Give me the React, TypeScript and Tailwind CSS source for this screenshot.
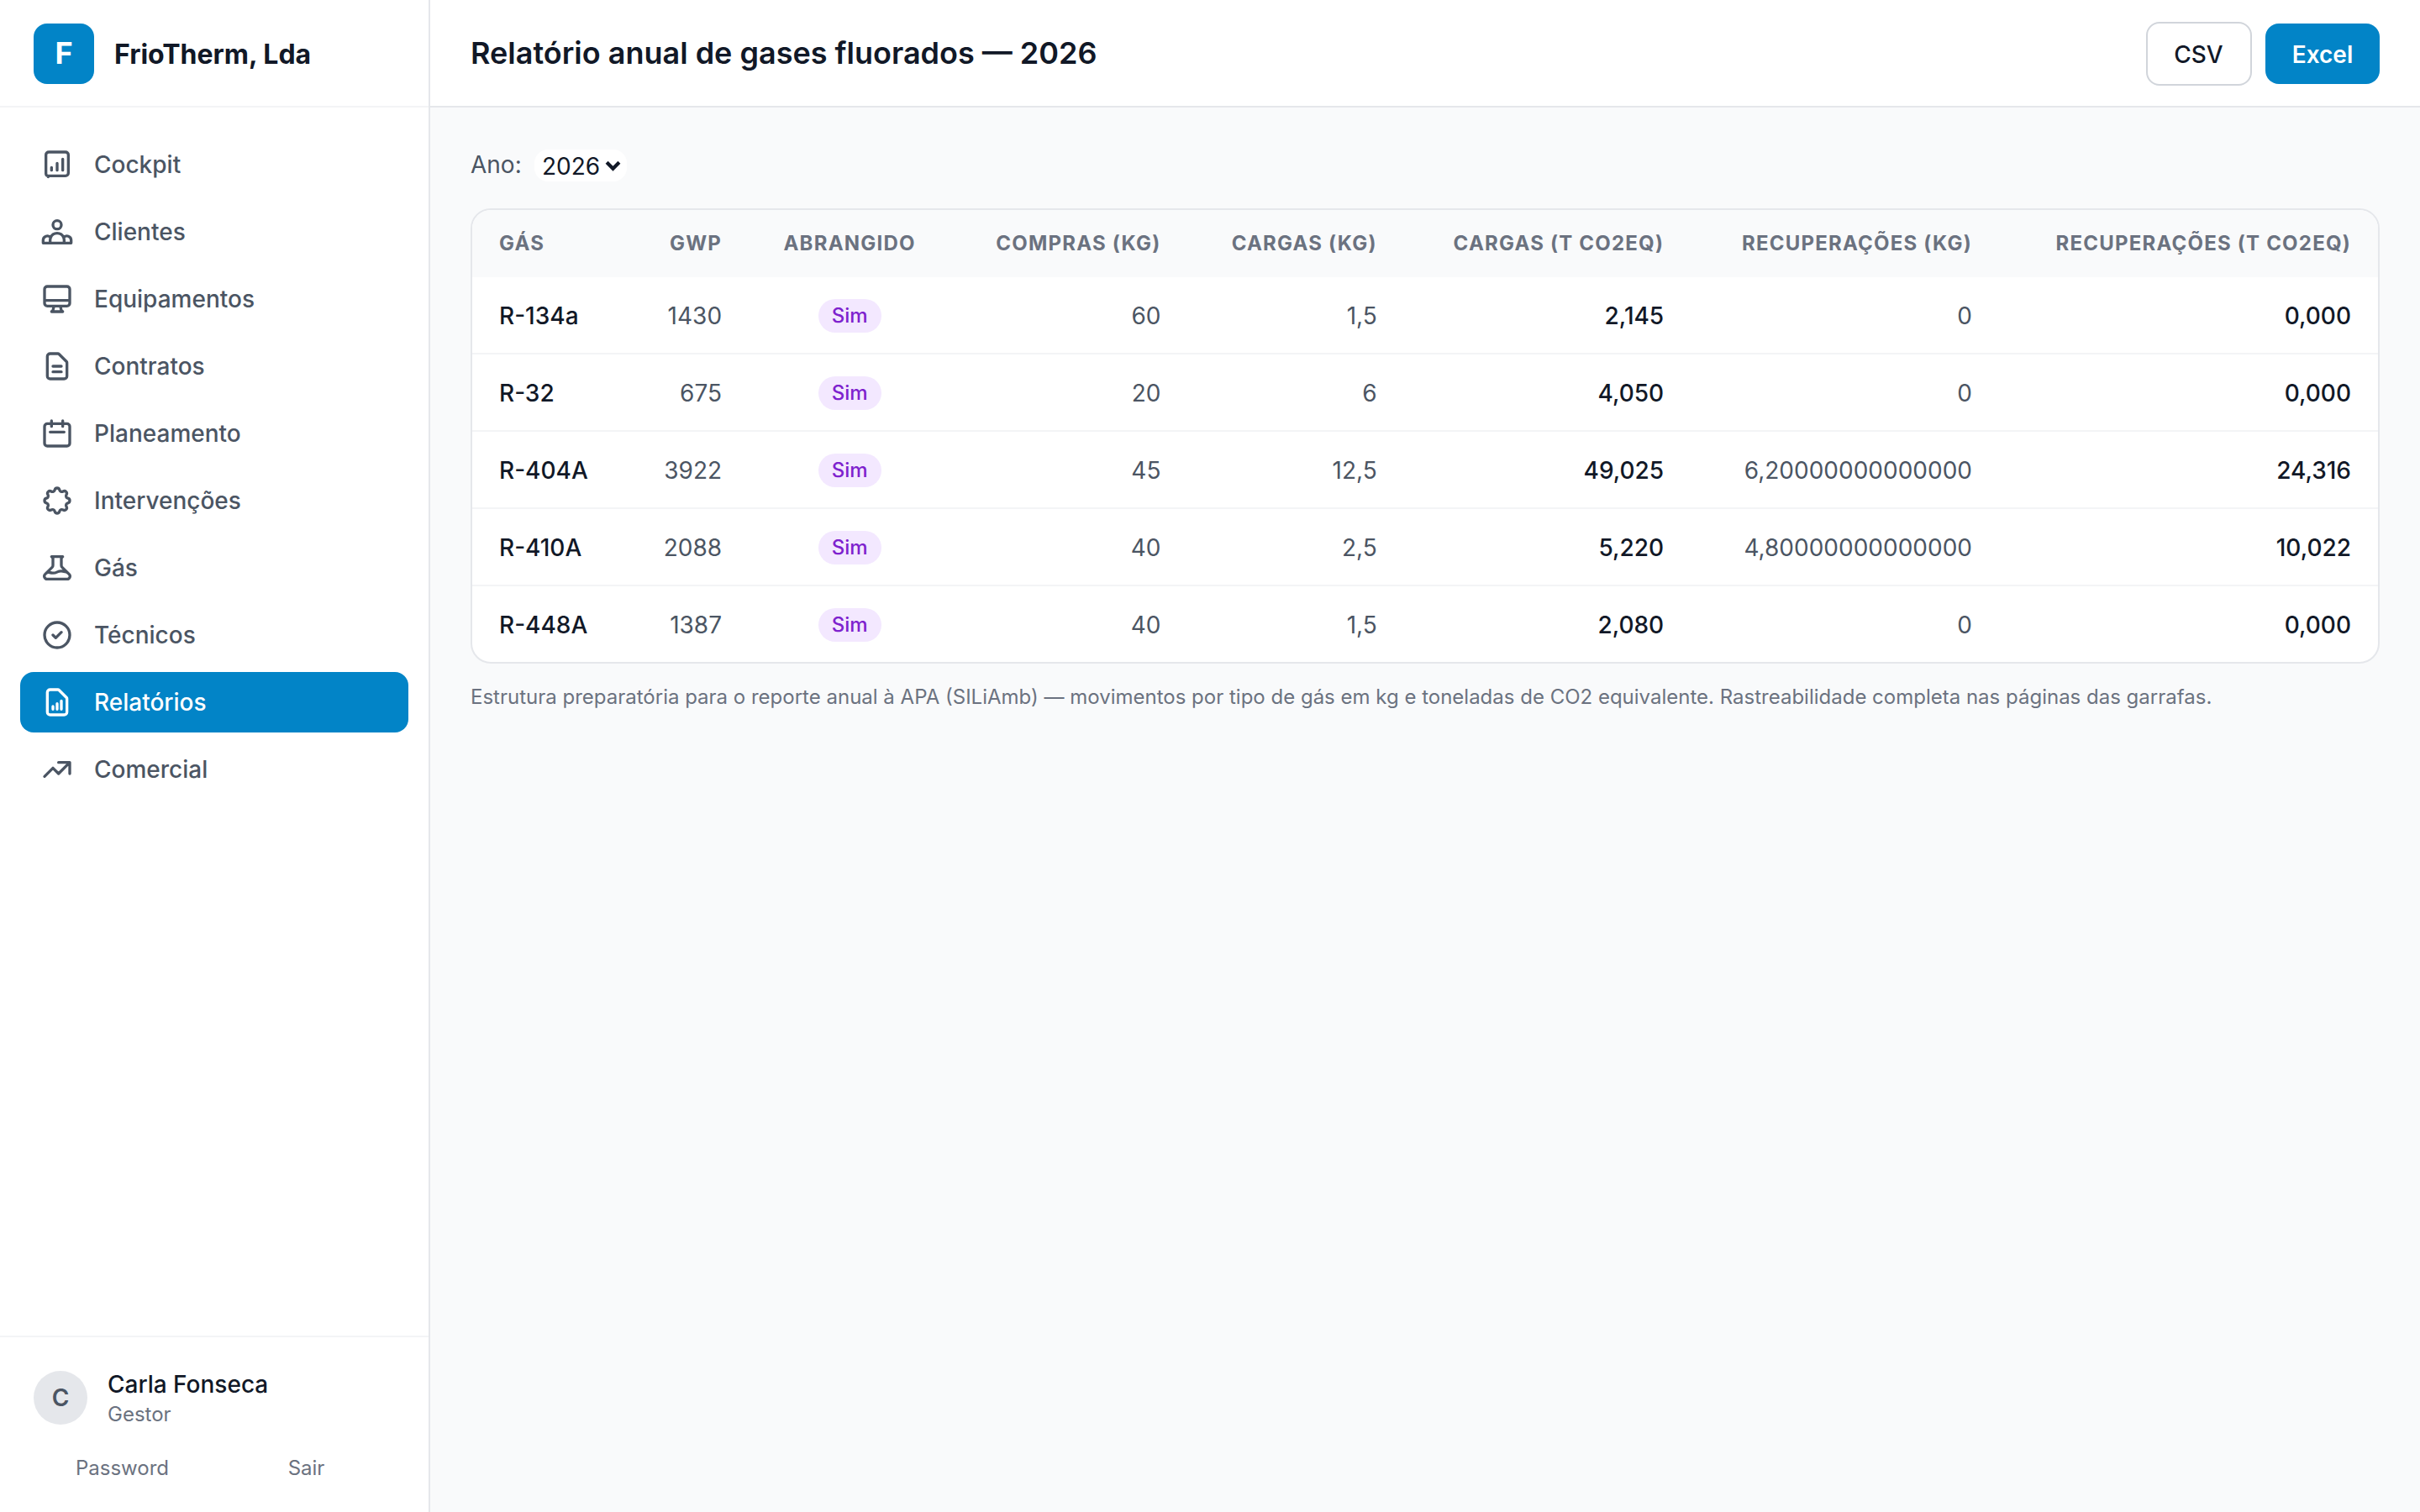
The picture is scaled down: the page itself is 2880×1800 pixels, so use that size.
import type { ReactNode } from "react";

const PAGE =
  "m2 5H7a2 2 0 01-2-2V5a2 2 0 012-2h5.586a1 1 0 01.707.293l5.414 5.414a1 1 0 01.293.707V19a2 2 0 01-2 2z";

const NAV: { label: string; d: string; active?: boolean }[] = [
  {
    label: "Cockpit",
    d: "M8 16v-2m4 2v-5m4 5V8M5.6 20.7V20H18a2 2 0 002-2V5a2 2 0 00-2-2H6a2 2 0 00-2 2v13.5a1.5 1.5 0 001.6 1.5",
  },
  {
    label: "Clientes",
    d: "M17 20h5v-2a3 3 0 00-5.356-1.857M17 20H7m10 0v-2c0-.656-.126-1.283-.356-1.857M7 20H2v-2a3 3 0 015.356-1.857M7 20v-2c0-.656.126-1.283.356-1.857m0 0a5.002 5.002 0 019.288 0M15 7a3 3 0 11-6 0 3 3 0 016 0z",
  },
  {
    label: "Equipamentos",
    d: "M9.75 17L9 20l-1 1h8l-1-1-.75-3M3 13h18M5 17h14a2 2 0 002-2V5a2 2 0 00-2-2H5a2 2 0 00-2 2v10a2 2 0 002 2z",
  },
  { label: "Contratos", d: "M9 12h6m-6 4h6" + PAGE },
  {
    label: "Planeamento",
    d: "M8 7V3m8 4V3m-9 8h10M5 21h14a2 2 0 002-2V7a2 2 0 00-2-2H5a2 2 0 00-2 2v12a2 2 0 002 2z",
  },
  {
    label: "Intervenções",
    d: "M10.325 4.317c.426-1.756 2.924-1.756 3.35 0a1.724 1.724 0 002.573 1.066c1.543-.94 3.31.826 2.37 2.37a1.724 1.724 0 001.065 2.572c1.756.426 1.756 2.924 0 3.35a1.724 1.724 0 00-1.066 2.573c.94 1.543-.826 3.31-2.37 2.37a1.724 1.724 0 00-2.572 1.065c-.426 1.756-2.924 1.756-3.35 0a1.724 1.724 0 00-2.573-1.066c-1.543.94-3.31-.826-2.37-2.37a1.724 1.724 0 00-1.065-2.572c-1.756-.426-1.756-2.924 0-3.35a1.724 1.724 0 001.066-2.573c-.94-1.543.826-3.31 2.37-2.37.996.608 2.296.07 2.572-1.065z",
  },
  {
    label: "Gás",
    d: "M19.428 15.428a2 2 0 00-1.022-.547l-2.387-.477a6 6 0 00-3.86.517l-.318.158a6 6 0 01-3.86.517L6.05 15.21a2 2 0 00-1.806.547M8 4h8l-1 1v5.172a2 2 0 00.586 1.414l5 5c1.26 1.26.367 3.414-1.415 3.414H4.828c-1.782 0-2.674-2.154-1.414-3.414l5-5A2 2 0 009 10.172V5L8 4z",
  },
  { label: "Técnicos", d: "M9 12l2 2 4-4m6 2a9 9 0 11-18 0 9 9 0 0118 0z" },
  {
    label: "Relatórios",
    d: "M9 17v-2m3 2v-4m3 4v-6m2 10H7a2 2 0 01-2-2V5a2 2 0 012-2h5.586a1 1 0 01.707.293l5.414 5.414a1 1 0 01.293.707V19a2 2 0 01-2 2z",
    active: true,
  },
  { label: "Comercial", d: "M13 7h8m0 0v8m0-8l-8 8-4-4-6 6" },
];

const ROWS = [
  ["R-134a", "1430", "60", "1,5", "2,145", "0", "0,000"],
  ["R-32", "675", "20", "6", "4,050", "0", "0,000"],
  ["R-404A", "3922", "45", "12,5", "49,025", "6,20000000000000", "24,316"],
  ["R-410A", "2088", "40", "2,5", "5,220", "4,80000000000000", "10,022"],
  ["R-448A", "1387", "40", "1,5", "2,080", "0", "0,000"],
];

function Th({ children, className }: { children: ReactNode; className: string }) {
  return <th className={`px-8 py-6 font-bold ${className}`}>{children}</th>;
}

function Td({ children, className = "" }: { children: ReactNode; className?: string }) {
  return <td className={`px-8 pt-[25px] pb-[23px] ${className}`}>{children}</td>;
}

function Sidebar() {
  return (
    <aside className="flex w-[512px] shrink-0 flex-col border-r-2 border-[#e5e7eb] bg-white">
      <div className="flex h-32 shrink-0 items-center gap-6 border-b-2 border-[#f3f4f6] px-10 pt-0.5">
        <div className="flex size-[72px] items-center justify-center rounded-2xl bg-[#0284c7] pb-0.5 text-[36px] font-bold text-white">
          F
        </div>
        <span className="pt-0.5 text-[32px] leading-[48px] font-bold">FrioTherm, Lda</span>
      </div>
      <nav className="flex flex-1 flex-col gap-2 px-6 py-8">
        {NAV.map((item) => (
          <a
            key={item.label}
            className={`flex h-[72px] items-center gap-6 rounded-2xl px-6 text-[28px] leading-10 font-medium ${
              item.active ? "bg-[#0284c7] text-white" : "text-[#4b5563]"
            }`}
          >
            <svg
              viewBox="0 0 24 24"
              className="size-10 shrink-0"
              fill="none"
              stroke="currentColor"
              strokeWidth={2}
              strokeLinecap="round"
              strokeLinejoin="round"
            >
              <path d={item.d} />
            </svg>
            {item.label}
          </a>
        ))}
      </nav>
      <div className="h-[210px] shrink-0 border-t-2 border-[#f3f4f6] px-10 pt-9">
        <div className="flex items-center gap-6">
          <div className="flex size-16 items-center justify-center rounded-full bg-[#e5e7eb] text-[28px] font-semibold text-[#4b5563]">
            C
          </div>
          <div>
            <p className="text-[28px] leading-10 font-medium">Carla Fonseca</p>
            <p className="text-2xl leading-8 text-[#6b7280]">Gestor</p>
          </div>
        </div>
        <div className="mt-8 flex gap-2 text-center text-2xl leading-8 text-[#6b7280]">
          <a className="flex-1">Password</a>
          <a className="flex-1">Sair</a>
        </div>
      </div>
    </aside>
  );
}

export default function App() {
  return (
    <div className="flex h-screen bg-[#f9fafb] font-['Inter',sans-serif] text-[#111827]">
      <Sidebar />
      <div className="flex min-w-0 flex-1 flex-col">
        <header className="flex h-32 shrink-0 items-center justify-between border-b-2 border-[#e5e7eb] bg-white px-12 pt-0.5">
          <h1 className="pb-0.5 text-[36px] leading-[56px] font-semibold">
            Relatório anual de gases fluorados — 2026
          </h1>
          <div className="flex items-center gap-4 text-[28px] leading-10">
            <button className="w-[126px] rounded-2xl border-2 border-[#d1d5db] pt-[17px] pr-px pb-[15px] font-medium">
              CSV
            </button>
            <button className="w-[136px] rounded-2xl bg-[#0284c7] pt-[17px] pb-[15px] font-semibold text-white">
              Excel
            </button>
          </div>
        </header>
        <main className="flex-1 p-12">
          <div className="mb-8 flex h-10 items-start gap-4 text-[28px]">
            <span className="w-[60px] leading-10 text-[#4b5563]">Ano:</span>
            <div className="mt-0.5 flex h-[38px] w-[110px] items-center gap-1.5 rounded-2xl bg-white pl-[9px]">
              <span className="pt-0.5 leading-[38px]">2026</span>
              <svg viewBox="0 0 18 12" className="h-[13px] w-[19px] shrink-0" fill="none" stroke="currentColor" strokeWidth={4}>
                <path d="M2 2l7 7 7-7" />
              </svg>
            </div>
          </div>
          <div className="overflow-hidden rounded-3xl border-2 border-[#e5e7eb] bg-white">
            <table className="w-full text-[28px] leading-10">
              <thead className="bg-[#f9fafb] text-2xl leading-8 tracking-wider text-[#6b7280] uppercase">
                <tr>
                  <Th className="text-left">Gás</Th>
                  <Th className="text-right">GWP</Th>
                  <Th className="text-center">Abrangido</Th>
                  <Th className="text-right">Compras (kg)</Th>
                  <Th className="text-right">Cargas (kg)</Th>
                  <Th className="text-right">Cargas (t CO2eq)</Th>
                  <Th className="text-right">Recuperações (kg)</Th>
                  <Th className="text-right">Recuperações (t CO2eq)</Th>
                </tr>
              </thead>
              <tbody className="divide-y-2 divide-[#f3f4f6] text-right text-[#4b5563]">
                {ROWS.map(([gas, gwp, buy, load, loadT, rec, recT]) => (
                  <tr key={gas}>
                    <Td className="text-left font-medium text-[#111827]">{gas}</Td>
                    <Td>{gwp}</Td>
                    <td className="px-8 py-6 text-center">
                      <span className="inline-block rounded-full bg-[#f3e8ff] px-4 py-1 text-2xl leading-8 font-medium text-[#7e22ce]">
                        Sim
                      </span>
                    </td>
                    <Td>{buy}</Td>
                    <Td>{load}</Td>
                    <Td className="font-medium text-[#111827]">{loadT}</Td>
                    <Td>{rec}</Td>
                    <Td className="font-medium text-[#111827]">{recT}</Td>
                  </tr>
                ))}
              </tbody>
            </table>
          </div>
          <p className="mt-6 text-2xl leading-8 text-[#6b7280]">
            Estrutura preparatória para o reporte anual à APA (SILiAmb) — movimentos por tipo de gás em kg e
            toneladas de CO2 equivalente. Rastreabilidade completa nas páginas das garrafas.
          </p>
        </main>
      </div>
    </div>
  );
}
